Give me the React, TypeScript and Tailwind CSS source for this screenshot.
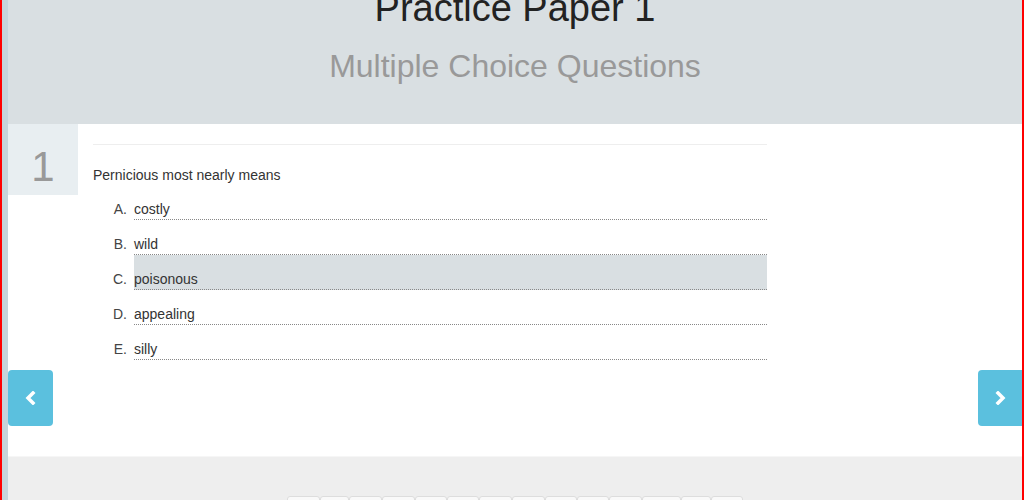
import React from "react";

const options = [
  { letter: "A", text: "costly" },
  { letter: "B", text: "wild" },
  { letter: "C", text: "poisonous", selected: true },
  { letter: "D", text: "appealing" },
  { letter: "E", text: "silly" },
];

const pages = [33, 29, 33, 33, 32, 32, 33, 33, 32, 32, 33, 39, 30, 32];

function Chevron({ dir }: { dir: "left" | "right" }) {
  return (
    <svg width="14" height="14" viewBox="0 0 14 14" fill="none">
      <path
        d={dir === "left" ? "M9 2 4 7l5 5" : "M5 2l5 5-5 5"}
        stroke="white"
        strokeWidth={3.5}
        strokeLinecap="square"
        strokeLinejoin="miter"
      />
    </svg>
  );
}

export default function App() {
  return (
    <div
      className="flex h-[500px] w-[1024px] overflow-hidden bg-white text-[#333]"
      style={{ fontFamily: '"Liberation Sans", Arial, sans-serif' }}
    >
      {/* window edge */}
      <div className="w-[2px] shrink-0 bg-[#ff0000]" />
      <div className="w-[6px] shrink-0 bg-[#c6d4da]" />

      <div className="flex min-w-0 flex-1 flex-col">
        {/* Heading */}
        <header className="flex h-[124px] shrink-0 flex-col items-center bg-[#d9dfe2]">
          <h1 className="mt-[-12px] text-[38px] leading-[40px] text-[#222]">
            Practice Paper 1
          </h1>
          <h2 className="mt-[21px] text-[32px] leading-[34px] text-[#999]">
            Multiple Choice Questions
          </h2>
        </header>

        {/* Question slide */}
        <section className="relative flex h-[333px] shrink-0 border-b border-[#f6f6f6] bg-white">
          <div className="flex h-[71px] w-[70px] shrink-0 justify-center bg-[#e8eef1] pt-[20px] text-[42px] leading-[46px] text-[#999]">
            1
          </div>

          <div className="ml-[15px] w-[674px] pt-[20px]">
            <hr className="border-t border-[#eeeeee]" />
            <p className="mt-[20px] text-[14px] leading-[20px]">
              Pernicious most nearly means
            </p>
            <ul>
              {options.map((o) => (
                <li key={o.letter} className="flex text-[14px]">
                  <span className="w-[41px] shrink-0 pt-[17px] pr-[7px] text-right leading-[14px] text-[#444]">
                    {o.letter}.
                  </span>
                  <span
                    className={
                      "flex-1 border-b border-dotted border-[#888] pt-[17px] pb-[3px] leading-[14px] " +
                      (o.selected ? "bg-[#d9dfe2]" : "")
                    }
                  >
                    {o.text}
                  </span>
                </li>
              ))}
            </ul>
          </div>

          {/* carousel controls */}
          <button className="absolute left-0 top-[246px] flex h-[56px] w-[45px] items-center justify-center rounded-[4px] bg-[#5bc0de]">
            <Chevron dir="left" />
          </button>
          <button className="absolute right-0 top-[246px] flex h-[56px] w-[44px] items-center justify-center rounded-l-[4px] bg-[#5bc0de]">
            <Chevron dir="right" />
          </button>
        </section>

        {/* Footer with pager */}
        <footer className="flex flex-1 justify-start bg-[#eeeeee] pl-[279px] pt-[39px]">
          {pages.map((w, i) => (
            <div
              key={i}
              className="h-[30px] shrink-0 rounded-t-[3px] border border-[#dddddd] bg-[#f9f9f9]"
              style={{ width: w }}
            />
          ))}
        </footer>
      </div>

      <div className="w-[2px] shrink-0 bg-[#ff0000]" />
    </div>
  );
}
